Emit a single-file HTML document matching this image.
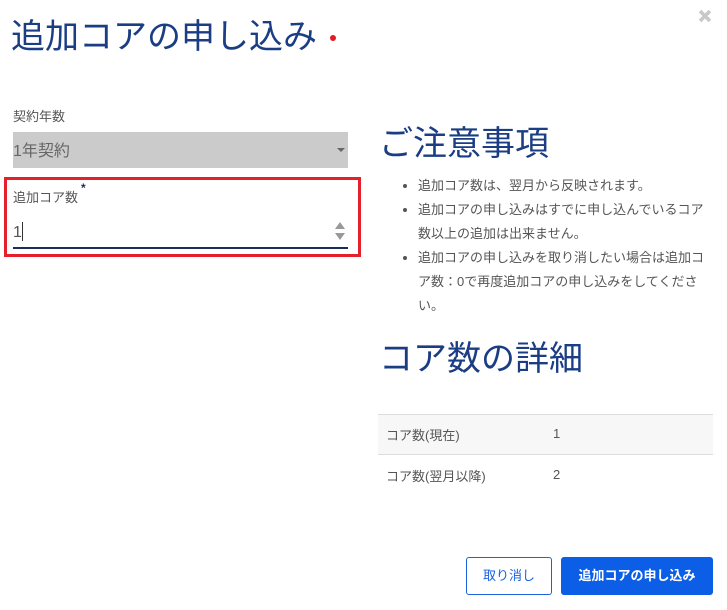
<!DOCTYPE html>
<html><head><meta charset="utf-8"><style>
*{margin:0;padding:0;box-sizing:border-box}
body{width:727px;height:610px;background:#fff;position:relative;overflow:hidden;font-family:"Liberation Sans","Noto Sans CJK JP",sans-serif;color:#555}
.a{position:absolute;white-space:nowrap}
h1,h2{font-weight:normal;color:#1a3d84;position:absolute;white-space:nowrap;font-size:34px;line-height:38px}
ul{position:absolute;left:418px;top:174px;width:291px;font-size:13px;line-height:24px;color:#555;list-style:none}
ul li{position:relative}
ul li:before{content:"";position:absolute;left:-15px;top:10px;width:4px;height:4px;border-radius:50%;background:#555}
</style></head><body>
<h1 style="left:11px;top:18px">追加コアの申し込み</h1>
<div class="a" style="left:330px;top:35px;width:6px;height:6px;border-radius:50%;background:#e31b23"></div>
<svg class="a" style="left:698px;top:9px" width="14" height="14"><path d="M2 2L12 12M12 2L2 12" stroke="#c8c8c8" stroke-width="3.5"/></svg>

<div class="a" style="left:13px;top:106px;font-size:13px;color:#555">契約年数</div>
<div class="a" style="left:13px;top:132px;width:335px;height:36px;background:#cbcbcb"></div>
<div class="a" style="left:13px;top:137px;font-size:16px;color:#666">1年契約</div>
<div class="a" style="left:337px;top:148px;width:0;height:0;border-left:4px solid transparent;border-right:4px solid transparent;border-top:4px solid #666"></div>

<div class="a" style="left:4px;top:177px;width:357px;height:80px;border:3px solid #e4202a"></div>
<div class="a" style="left:13px;top:187px;font-size:13px;color:#555">追加コア数</div>
<div class="a" style="left:81px;top:181px;font-size:12px;color:#1a2e5e;font-weight:bold">*</div>
<div class="a" style="left:13px;top:222px;font-size:16px;color:#555">1<span style="display:inline-block;width:1px;height:19px;background:#333;vertical-align:-4px"></span></div>
<div class="a" style="left:335px;top:222px;width:0;height:0;border-left:5px solid transparent;border-right:5px solid transparent;border-bottom:7px solid #999"></div>
<div class="a" style="left:335px;top:233px;width:0;height:0;border-left:5px solid transparent;border-right:5px solid transparent;border-top:7px solid #999"></div>
<div class="a" style="left:13px;top:247px;width:335px;height:2px;background:#1a2e5e"></div>

<h2 style="left:379px;top:125px">ご注意事項</h2>
<ul>
<li>追加コア数は、翌月から反映されます。</li>
<li>追加コアの申し込みはすでに申し込んでいるコア数以上の追加は出来ません。</li>
<li>追加コアの申し込みを取り消したい場合は追加コア数：0で再度追加コアの申し込みをしてください。</li>
</ul>
<h2 style="left:379px;top:340px">コア数の詳細</h2>

<div class="a" style="left:378px;top:414px;width:335px;height:41px;background:#f7f7f7;border-top:1px solid #ddd;border-bottom:1px solid #ddd"></div>
<div class="a" style="left:386px;top:425px;font-size:13px">コア数(現在)</div>
<div class="a" style="left:553px;top:426px;font-size:13px">1</div>
<div class="a" style="left:386px;top:466px;font-size:13px">コア数(翌月以降)</div>
<div class="a" style="left:553px;top:467px;font-size:13px">2</div>

<div class="a" style="left:466px;top:557px;width:86px;height:38px;border:1px solid #1a62e0;border-radius:3px;color:#1a62e0;font-size:13px;text-align:center;line-height:36px">取り消し</div>
<div class="a" style="left:561px;top:557px;width:152px;height:38px;background:#0d5ee6;border-radius:3px;color:#fff;font-size:13px;font-weight:bold;text-align:center;line-height:38px">追加コアの申し込み</div>
</body></html>
